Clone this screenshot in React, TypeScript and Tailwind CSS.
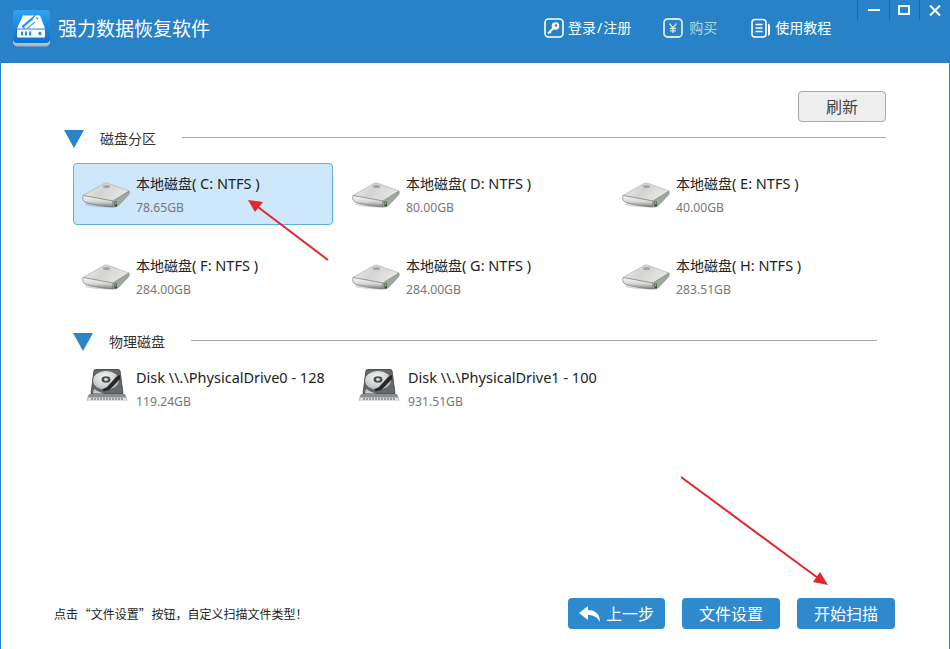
import React from "react";

const FONT = { fontFamily: '"Noto Sans","Noto Sans CJK SC",sans-serif' };

function Logo() {
  return (
    <svg width="37" height="37" viewBox="0 0 37 37" className="shrink-0">
      <defs>
        <linearGradient id="lg" x1="0" y1="0" x2="0" y2="1">
          <stop offset="0" stopColor="#2ea4f2" />
          <stop offset="1" stopColor="#0b6fd3" />
        </linearGradient>
        <linearGradient id="lb" x1="0" y1="0" x2="0" y2="1">
          <stop offset="0" stopColor="#f4f4f4" />
          <stop offset="1" stopColor="#a9adb0" />
        </linearGradient>
      </defs>
      <path d="M0 27h37v5a4.500 4.500 0 0 1-4.500 4.500h-28A4.500 4.500 0 0 1 0 32z" fill="url(#lb)" />
      <rect x="0" y="0" width="37" height="33" rx="4" fill="url(#lg)" />
      <path d="M4 18.500 10 5.500h17l5 13z" fill="#fff" />
      <path d="M10.500 18.500 24 7" stroke="#2b8fe4" strokeWidth="6" />
      <path d="M12 18 22 9.500" stroke="#fff" strokeWidth="2.800" />
      <path d="M20.500 10.500a4 4 0 0 1 4.500-5l-2 2.300 1.500 1.700 2.300-2a4 4 0 0 1-5 4.500z" fill="#fff" />
      <rect x="4" y="19.500" width="28" height="8" rx="1" fill="#fff" />
      <rect x="8" y="21.500" width="2" height="4" fill="#2b8fe4" />
      <rect x="12" y="21.500" width="2" height="4" fill="#2b8fe4" />
      <rect x="16" y="21.500" width="2" height="4" fill="#2b8fe4" />
      <circle cx="27" cy="23.500" r="1.700" fill="#2b8fe4" />
    </svg>
  );
}

function KeyIcon() {
  return (
    <svg width="20" height="20" viewBox="0 0 20 20" className="shrink-0">
      <rect x="1" y="1" width="18" height="18" rx="3.500" fill="none" stroke="#fff" strokeWidth="1.600" />
      <circle cx="11.500" cy="8" r="3.800" fill="#fff" />
      <circle cx="12" cy="7.500" r="1.300" fill="#2882c8" />
      <path d="M9 10.500 4 15.500" stroke="#fff" strokeWidth="2" />
      <path d="M5.500 13.500 7 15" stroke="#fff" strokeWidth="1.500" />
    </svg>
  );
}

function YenIcon() {
  return (
    <svg width="20" height="20" viewBox="0 0 20 20" className="shrink-0">
      <rect x="1" y="1" width="18" height="18" rx="3.500" fill="none" stroke="#d8e6dc" strokeWidth="1.800" />
      <path d="M6.500 5.500 10 10l3.500-4.500M10 10v5M7 10.500h6M7 12.800h6" fill="none" stroke="#d8e6dc" strokeWidth="1.300" />
    </svg>
  );
}

function DocIcon() {
  return (
    <svg width="20" height="20" viewBox="0 0 20 20" className="shrink-0">
      <rect x="1" y="1.500" width="14" height="17.500" rx="3" fill="none" stroke="#fff" strokeWidth="1.600" />
      <path d="M4.500 6.500h7M4.500 10h7M4.500 13.500h7" stroke="#fff" strokeWidth="1.300" />
      <path d="M17 5.500c1.300.5 2 1 2 2.500v7c0 1.500-.7 2.500-2 3z" fill="#fff" />
    </svg>
  );
}

function VolumeIcon() {
  return (
    <svg width="48" height="28" viewBox="0 0 48 28" className="shrink-0">
      <defs>
        <linearGradient id="vt" x1="0" y1="0" x2="1" y2="0.300">
          <stop offset="0" stopColor="#f1f1ef" />
          <stop offset="0.500" stopColor="#d3d4d1" />
          <stop offset="1" stopColor="#e6e6e4" />
        </linearGradient>
        <linearGradient id="vf" x1="0" y1="0" x2="0" y2="1">
          <stop offset="0" stopColor="#fbfbfa" />
          <stop offset="0.550" stopColor="#d6d7d4" />
          <stop offset="1" stopColor="#77797a" />
        </linearGradient>
      </defs>
      <path d="M3 24c10 2.500 24 3 32 2l-4-3L6 20z" fill="#000" opacity="0.150" />
      <path d="M1 14.500 22 2.500c1.500-.7 3-.7 4.500 0L47 10 31 20z" fill="url(#vt)" stroke="#a7a9a6" strokeWidth="0.600" />
      <ellipse cx="24.500" cy="5.500" rx="3.500" ry="1.500" fill="#a1a3a0" />
      <path d="M1 14.500 31 20v6C21 25.500 10 23.500 3 21c-2.200-1.200-2.800-4-2-6.500z" fill="url(#vf)" stroke="#6d6f6e" strokeWidth="0.600" />
      <path d="M31 20 47 10c.5 1.500.3 3-.8 4.200L37 24c-1.800 1.500-3.800 2-6 2z" fill="#a3a5a2" stroke="#77797a" strokeWidth="0.500" />
      <rect x="32.500" y="20.500" width="2.500" height="5" fill="#31482f" />
      <rect x="33" y="21" width="1.500" height="2.500" fill="#72c452" />
    </svg>
  );
}

function DiskIcon() {
  return (
    <svg width="40" height="33" viewBox="0 0 40 33" className="shrink-0">
      <defs>
        <radialGradient id="pl" cx="0.450" cy="0.350" r="0.750">
          <stop offset="0" stopColor="#fafafa" />
          <stop offset="0.700" stopColor="#c2c4c4" />
          <stop offset="1" stopColor="#7c7f80" />
        </radialGradient>
      </defs>
      <path d="M7 1.500C7.500.8 8 .5 9 .5h22c1 0 1.500.3 2 1l3 23H4z" fill="#66696b" stroke="#3a3c3e" strokeWidth="0.800" />
      <ellipse cx="19" cy="11.500" rx="13.500" ry="10" fill="url(#pl)" stroke="#48494b" strokeWidth="0.700" />
      <ellipse cx="19" cy="10.500" rx="4.500" ry="3.300" fill="#4d5052" />
      <ellipse cx="19" cy="10.500" rx="2" ry="1.400" fill="#dcdddd" />
      <path d="M33 6 29.500 7.500 20 18l-5 2.500 2 2 6-2 10-10.500z" fill="#26282a" />
      <path d="M7 20c3 2 7 3.500 10 4.500H6z" fill="#c9cbcb" />
      <path d="M2 25h36l1.500 3.500v3.500H.5v-3.500z" fill="#8b8e8f" />
      <rect x="1" y="28.500" width="38" height="3.500" fill="#dcdddd" />
      <path d="M4 30h32" stroke="#55585a" strokeWidth="1" strokeDasharray="2 1" />
    </svg>
  );
}

function SectionHead({ label, line }: { label: string; line: string }) {
  return (
    <div className="flex h-5 items-center">
      <svg width="20" height="18" viewBox="0 0 20 18" className="shrink-0">
        <polygon points="0,0 20,0 10,18" fill="#2b84c8" />
      </svg>
      <span className="ml-4 text-[14px] leading-5 text-[#333]">{label}</span>
      <div className={`mb-1 ml-[26px] h-px bg-[#a8a8a8] ${line}`} />
    </div>
  );
}

function Volume({ name, size, active }: { name: string; size: string; active?: boolean }) {
  return (
    <div
      className={
        active
          ? "flex h-[62px] w-[260px] items-center rounded-[4px] border border-[#5eafe6] bg-[#cfe7fa] pl-2"
          : "flex h-[62px] w-[260px] items-center rounded-[4px] border border-transparent pl-2"
      }
    >
      <div className="mt-[2px] w-[54px]">
        <VolumeIcon />
      </div>
      <div className="flex flex-col pt-px">
        <span className="text-[14px] leading-5 whitespace-nowrap text-[#222]">
          本地磁盘<span className="text-[14.5px]">{name}</span>
        </span>
        <span className="mt-[5px] text-[12.2px] leading-[18px] text-[#777]">{size}</span>
      </div>
    </div>
  );
}

function Disk({ name, size }: { name: string; size: string }) {
  return (
    <div className="flex w-[272px] items-start pl-[14px]">
      <div className="mt-[2px] w-[49px]">
        <DiskIcon />
      </div>
      <div className="flex flex-col">
        <span className="text-[14.5px] leading-5 whitespace-nowrap text-[#222]">{name}</span>
        <span className="mt-[6px] text-[12.2px] leading-[18px] text-[#777]">{size}</span>
      </div>
    </div>
  );
}

function Action({ children, w }: { children: React.ReactNode; w: string }) {
  return (
    <button className={`flex h-[31px] items-center justify-center gap-[5px] rounded-[4px] bg-[#2f8acd] text-[16px] text-white ${w}`}>
      {children}
    </button>
  );
}

export default function App() {
  return (
    <div className="relative flex h-[649px] w-[950px] flex-col overflow-hidden bg-white" style={FONT}>
      <header className="flex h-[63px] shrink-0 items-start bg-[#2882c8]">
        <div className="mt-[10px] ml-[13px] flex items-center">
          <Logo />
          <span className="ml-2 text-[19px] leading-[34px] text-white">强力数据恢复软件</span>
        </div>
        <nav className="mt-[18px] ml-[334px] flex items-center">
          <div className="flex items-center gap-1 text-[14px] leading-5 text-white">
            <KeyIcon />
            <span>
              登录<span className="px-px">/</span>注册
            </span>
          </div>
          <div className="ml-8 flex items-center gap-[6px] text-[14px] leading-5 text-[#b9d6d6]">
            <YenIcon />
            <span>购买</span>
          </div>
          <div className="ml-[34px] flex items-center gap-1 text-[14px] leading-5 text-white">
            <DocIcon />
            <span>使用教程</span>
          </div>
        </nav>
        <div className="ml-auto flex h-5 items-start">
          <div className="flex h-5 w-[32px] items-center justify-center border-l border-[#1a69a8]">
            <div className="h-[2px] w-3 bg-white" />
          </div>
          <div className="flex h-5 w-[30px] items-center justify-center border-l border-[#1a69a8] pr-[2px]">
            <div className="h-[10px] w-3 border-2 border-white" />
          </div>
          <div className="flex h-5 w-[31px] items-center justify-center border-l border-[#1a69a8]">
            <svg width="12" height="11" viewBox="0 0 12 11">
              <path d="M1 .5l10 10M11 .5l-10 10" stroke="#fff" strokeWidth="2" />
            </svg>
          </div>
        </div>
      </header>

      <main className="flex min-h-0 flex-1 flex-col border-x border-[#2882c8] pt-[28px]">
        <div className="flex justify-end pr-[63px]">
          <button className="h-[31px] w-[88px] rounded-[4px] border border-[#a8a8a8] bg-[#eeeeee] text-[16px] text-[#444]">
            刷新
          </button>
        </div>

        <section className="mt-[7px] ml-[63px]">
          <SectionHead label="磁盘分区" line="w-[704px]" />
          <div className="mt-[14px] ml-[9px] grid w-[810px] grid-cols-3 gap-y-[20px]">
            <Volume name="( C: NTFS )" size="78.65GB" active />
            <Volume name="( D: NTFS )" size="80.00GB" />
            <Volume name="( E: NTFS )" size="40.00GB" />
            <Volume name="( F: NTFS )" size="284.00GB" />
            <Volume name="( G: NTFS )" size="284.00GB" />
            <Volume name="( H: NTFS )" size="283.51GB" />
          </div>
        </section>

        <section className="mt-[25px] ml-[72px]">
          <SectionHead label="物理磁盘" line="w-[686px]" />
          <div className="mt-[15px] flex">
            <Disk name="Disk \\.\PhysicalDrive0 - 128" size="119.24GB" />
            <Disk name="Disk \\.\PhysicalDrive1 - 100" size="931.51GB" />
          </div>
        </section>

        <footer className="mt-auto mb-[20px] flex items-center pr-[54px] pl-[53px]">
          <span className="font-['Noto_Sans_CJK_SC'] text-[12px] text-[#222] [word-spacing:-2px]">
            点击 “文件设置” 按钮，自定义扫描文件类型！
          </span>
          <div className="ml-auto flex gap-[17px]">
            <Action w="w-[97px]">
              <svg width="22" height="16" viewBox="0 0 22 16">
                <path d="M0 7 9 0v4c7 0 12 4 12 12-3-5-6-7-12-7v5z" fill="#fff" />
              </svg>
              <span>上一步</span>
            </Action>
            <Action w="w-[98px]">文件设置</Action>
            <Action w="w-[98px]">开始扫描</Action>
          </div>
        </footer>
      </main>

      <svg className="pointer-events-none absolute top-0 left-0" width="950" height="649" viewBox="0 0 950 649">
        <path d="M328 260 258 207" stroke="#e2262c" strokeWidth="2" />
        <polygon points="248,200 263,202 255,212" fill="#e2262c" />
        <path d="M681 477 818 578" stroke="#e2262c" strokeWidth="2" />
        <polygon points="828,585 813,582 820,572" fill="#e2262c" />
      </svg>
    </div>
  );
}
